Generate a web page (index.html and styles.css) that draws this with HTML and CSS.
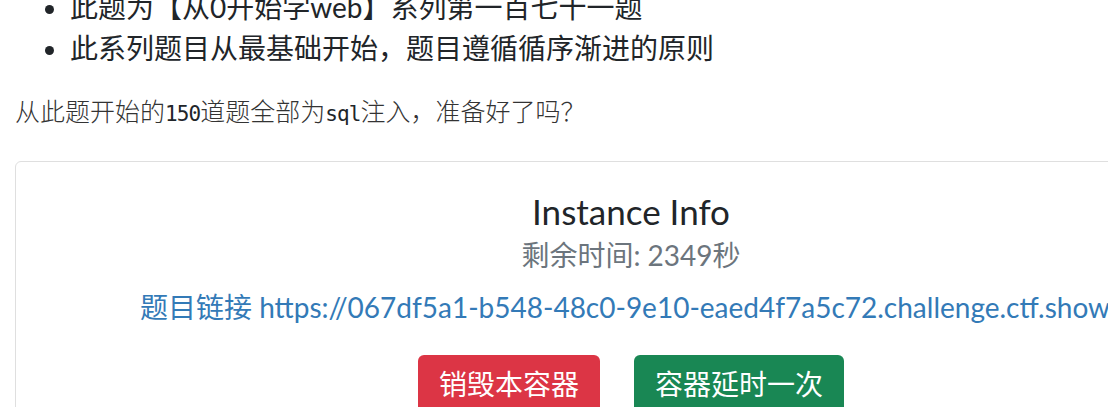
FILE: index.html
```html
<!DOCTYPE html>
<html lang="zh">
<head>
<meta charset="utf-8">
<link rel="stylesheet" href="styles.css">
</head>
<body>
<div class="page">
  <ul class="intro">
    <li>此题为【从0开始学web】系列第一百七十一题</li>
    <li>此系列题目从最基础开始，题目遵循循序渐进的原则</li>
  </ul>
  <p class="note">从此题开始的<code>150</code>道题全部为<code>sql</code>注入，准备好了吗？</p>
  <div class="card">
    <h2 class="title">Instance Info</h2>
    <div class="remain">剩余时间: 2349秒</div>
    <div class="link"><a href="#">题目链接 https://067df5a1-b548-48c0-9e10-eaed4f7a5c72.challenge.ctf.show/</a></div>
    <div class="actions">
      <button class="btn btn-danger">销毁本容器</button>
      <button class="btn btn-success">容器延时一次</button>
    </div>
  </div>
</div>
</body>
</html>
```
FILE: styles.css
```css
html, body {
  margin: 0;
  padding: 0;
  background: #fff;
  overflow: hidden;
}
body {
  font-family: Lato, "Noto Sans CJK SC", sans-serif;
  color: #212529;
}
.page {
  margin-top: -13px;
  padding-left: 15px;
}
.intro {
  margin: 0;
  padding-left: 55px;
  font-size: 28px;
  line-height: 41px;
}
.note {
  margin: 23px 0 0;
  font-size: 25px;
  line-height: 36px;
  color: #333;
  font-family: "Noto Sans CJK SC", sans-serif;
  font-weight: 300;
}
.note code {
  font-family: "DejaVu Sans Mono", monospace;
  font-size: 21px;
  letter-spacing: -0.9px;
  color: #212529;
  font-weight: 400;
}
.card {
  margin-top: 29px;
  width: 1230px;
  border: 1px solid #dfdfdf;
  border-radius: 6px;
  padding-top: 27px;
  text-align: center;
  height: 400px;
}
.title {
  margin: 0;
  font-size: 35px;
  font-weight: 400;
  line-height: 44px;
}
.remain {
  font-size: 28px;
  line-height: 44px;
  color: #6c757d;
}
.link {
  margin-top: 10px;
  font-size: 28px;
  line-height: 40px;
}
.link a {
  color: #337ab7;
  text-decoration: none;
}
.actions {
  margin-top: 28px;
  display: flex;
  justify-content: center;
  gap: 34px;
}
.btn {
  border: none;
  border-radius: 6px;
  color: #fff;
  font-family: Lato, "Noto Sans CJK SC", sans-serif;
  font-size: 28px;
  line-height: 42px;
  padding: 8px 21px;
}
.btn-danger { background: #dc3545; }
.btn-success { background: #198754; }
```
